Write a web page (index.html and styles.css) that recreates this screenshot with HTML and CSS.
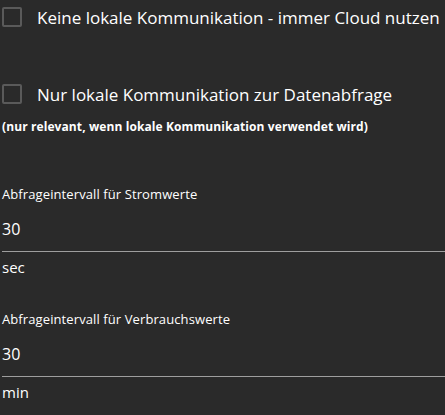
FILE: index.html
```html
<!DOCTYPE html>
<html lang="de">
<head>
<meta charset="utf-8">
<link rel="stylesheet" href="styles.css">
</head>
<body>
<div class="page">
  <label class="check-row first">
    <span class="box"></span>
    <span class="check-text">Keine lokale Kommunikation - immer Cloud nutzen</span>
  </label>
  <label class="check-row second">
    <span class="box"></span>
    <span class="check-text">Nur lokale Kommunikation zur Datenabfrage</span>
  </label>
  <div class="hint">(nur relevant, wenn lokale Kommunikation verwendet wird)</div>

  <div class="field f1">
    <div class="field-label">Abfrageintervall für Stromwerte</div>
    <div class="field-value">30</div>
    <div class="field-unit">sec</div>
  </div>
  <div class="field f2">
    <div class="field-label">Abfrageintervall für Verbrauchswerte</div>
    <div class="field-value">30</div>
    <div class="field-unit">min</div>
  </div>
</div>
</body>
</html>
```

FILE: styles.css
```css
html, body {
  margin: 0;
  padding: 0;
  background: #2a2a2a;
}
.page {
  width: 445px;
  height: 415px;
  overflow: hidden;
  padding-left: 2px;
  box-sizing: border-box;
  color: #ffffff;
  font-family: "Open Sans", "Noto Sans", sans-serif;
}
.check-row {
  display: flex;
  align-items: center;
  height: 34px;
}
.check-row.second {
  margin-top: 43px;
}
.box {
  width: 16px;
  height: 16px;
  border: 2px solid #5a5a5a;
  border-radius: 2px;
  flex: none;
}
.check-text {
  margin-left: 15px;
  font-size: 17px;
  white-space: nowrap;
}
.hint {
  margin-top: 8px;
  font-size: 12px;
  font-weight: bold;
  line-height: 16px;
  letter-spacing: 0.1px;
}
.field {
  display: flex;
  flex-direction: column;
}
.f1 { margin-top: 50px; }
.f2 { margin-top: 34px; }
.field-label {
  font-size: 13px;
  line-height: 18px;
  letter-spacing: 0.1px;
}
.field-value {
  margin-top: 15px;
  font-size: 16px;
  line-height: 22px;
  padding-bottom: 11px;
  border-bottom: 1px solid #9e9e9e;
}
.field-unit {
  margin-top: 6px;
  font-size: 15px;
  line-height: 18px;
}
```
